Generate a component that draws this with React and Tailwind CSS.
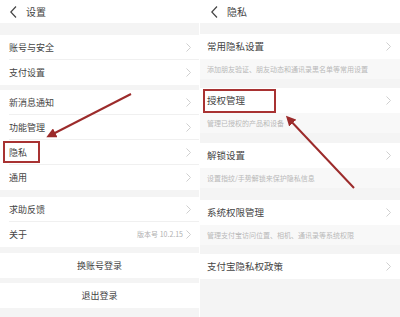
import React from 'react';

const FONT = { fontFamily: '"Noto Sans CJK SC", "Noto Sans", sans-serif' };

function Chevron({ className = '' }) {
  return (
    <svg width="5" height="9" viewBox="0 0 5 9" className={className}>
      <polyline points="0.5,0.5 4.5,4.5 0.5,8.5" fill="none" stroke="#cfcfcf" strokeWidth="1" />
    </svg>
  );
}

function Back() {
  return (
    <svg width="7" height="12" viewBox="0 0 7 12">
      <polyline points="6,0.5 0.8,6 6,11.5" fill="none" stroke="#444" strokeWidth="1.2" />
    </svg>
  );
}

function Header({ title, pad }) {
  return (
    <div className={`h-[23px] bg-white flex items-center ${pad} gap-[9px]`}>
      <Back />
      <span className="text-[10px] text-[#444] leading-none">{title}</span>
    </div>
  );
}

function Row({ label, right, last, boxed }) {
  return (
    <div className="h-[25px] bg-white flex items-center pl-[9px] pr-[8px] relative">
      <span className="text-[9px] text-[#444] leading-none">{label}</span>
      <div className="ml-auto flex items-center gap-[3px]">
        {right && <span className="text-[7px] text-[#b0b0b0] leading-none">{right}</span>}
        <Chevron />
      </div>
      {!last && <div className="absolute left-[9px] right-0 bottom-0 h-px bg-[#f0f0f0]" />}
      {boxed && <div className="absolute left-[3px] top-[1px] w-[37px] h-[22px] border-2 border-[#a83232]" />}
    </div>
  );
}

function Button({ label }) {
  return (
    <div className="h-[25px] bg-white flex items-center justify-center">
      <span className="text-[9px] text-[#444] leading-none">{label}</span>
    </div>
  );
}

function PRow({ label, desc, boxed }) {
  return (
    <div className="flex flex-col">
      <div className="h-[25px] bg-white flex items-center pl-[7px] pr-[9px] relative">
        <span className="text-[9.5px] text-[#444] leading-none">{label}</span>
        <Chevron className="ml-auto" />
        {boxed && <div className="absolute left-[3px] top-[1px] w-[73px] h-[24px] border-2 border-[#a83232]" />}
      </div>
      {desc && (
        <div className="h-[20px] bg-[#f8f8f8] flex items-center pl-[7px]">
          <span className="text-[7px] text-[#b8b8b8] leading-none whitespace-nowrap">{desc}</span>
        </div>
      )}
    </div>
  );
}

export default function App() {
  return (
    <div className="w-[400px] h-[317px] flex bg-[#f4f4f4] relative overflow-hidden" style={FONT}>
      {/* left: 设置 */}
      <div className="w-[199px] flex flex-col">
        <Header title="设置" pad="pl-[10px]" />
        <div className="h-[12px]" />
        <Row label="账号与安全" />
        <Row label="支付设置" last />
        <div className="h-[5px]" />
        <Row label="新消息通知" />
        <Row label="功能管理" />
        <Row label="隐私" boxed />
        <Row label="通用" last />
        <div className="h-[7px]" />
        <Row label="求助反馈" />
        <Row label="关于" right="版本号 10.2.15" last />
        <div className="h-[6px]" />
        <Button label="换账号登录" />
        <div className="h-[5px]" />
        <Button label="退出登录" />
      </div>

      <div className="w-px bg-white" />

      {/* right: 隐私 */}
      <div className="flex-1 flex flex-col">
        <Header title="隐私" pad="pl-[11px]" />
        <div className="h-[11px]" />
        <PRow label="常用隐私设置" desc="添加朋友验证、朋友动态和通讯录黑名单等常用设置" />
        <div className="h-[9px]" />
        <PRow label="授权管理" desc="管理已授权的产品和设备" boxed />
        <div className="h-[10px]" />
        <PRow label="解锁设置" desc="设置指纹/手势解锁来保护隐私信息" />
        <div className="h-[12px]" />
        <PRow label="系统权限管理" desc="管理支付宝访问位置、相机、通讯录等系统权限" />
        <div className="h-[9px]" />
        <PRow label="支付宝隐私权政策" />
      </div>

      {/* annotation arrows */}
      <svg className="absolute inset-0 pointer-events-none" width="400" height="317" viewBox="0 0 400 317">
        <defs>
          <marker id="ah" markerWidth="10" markerHeight="10" refX="7" refY="5" orient="auto" markerUnits="userSpaceOnUse">
            <path d="M0,0 L10,5 L0,10 Z" fill="#9c2b2b" />
          </marker>
        </defs>
        <line x1="131" y1="94" x2="49" y2="136" stroke="#9c2b2b" strokeWidth="2" markerEnd="url(#ah)" />
        <line x1="354" y1="188" x2="288" y2="118" stroke="#9c2b2b" strokeWidth="2" markerEnd="url(#ah)" />
      </svg>
    </div>
  );
}
